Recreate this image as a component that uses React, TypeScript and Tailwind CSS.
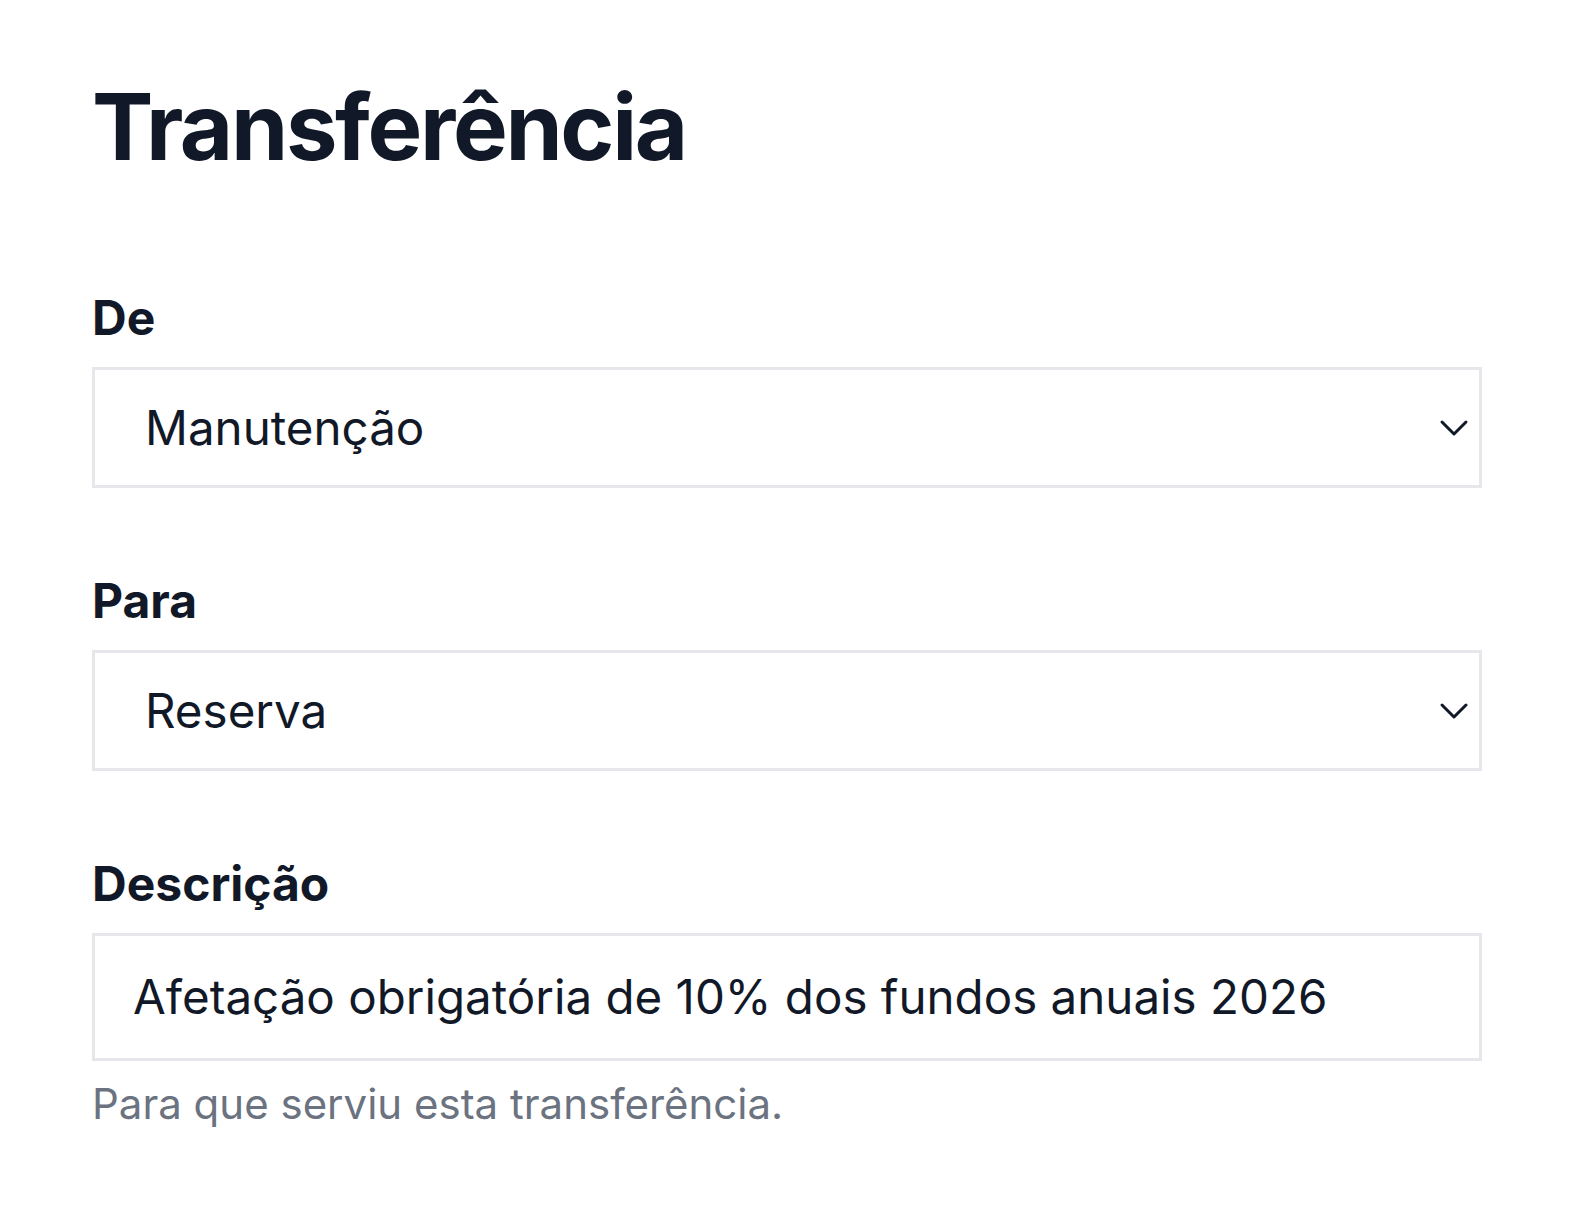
import React, { useState } from 'react';

const font = { fontFamily: 'Inter, "Noto Sans", sans-serif' };

function Chevron() {
  return (
    <svg width="30" height="18" viewBox="0 0 30 18" fill="none" className="shrink-0">
      <path d="M3 3 L15 15 L27 3" stroke="#111827" strokeWidth="3" strokeLinecap="round" strokeLinejoin="round" />
    </svg>
  );
}

function SelectField({ label, value }: { label: string; value: string }) {
  return (
    <div className="flex flex-col">
      <label className="text-[48px] font-bold leading-[56px] text-[#111827]">{label}</label>
      <div className="mt-[21px] flex h-[121px] items-center justify-between border-[3px] border-[#e5e7eb] bg-white pl-[50px] pr-[10px]">
        <span className="text-[47.5px] leading-[56px] text-[#111827]">{value}</span>
        <Chevron />
      </div>
    </div>
  );
}

export default function App() {
  const [desc] = useState('Afetação obrigatória de 10% dos fundos anuais 2026');

  return (
    <div className="min-h-[1214px] bg-white pl-[92px] pr-[94px] pt-[72px]" style={font}>
      <h1 className="text-[92px] font-bold leading-[110px] tracking-[-2.3px] text-[#111827]">Transferência</h1>

      <div className="mt-[108px] flex flex-col gap-[85px]">
        <SelectField label="De" value="Manutenção" />
        <SelectField label="Para" value="Reserva" />

        <div className="flex flex-col">
          <label className="text-[48px] font-bold leading-[56px] text-[#111827]">Descrição</label>
          <div className="mt-[21px] flex h-[128px] items-center border-[3px] border-[#e5e7eb] bg-white pl-[38px]">
            <span className="text-[47.5px] leading-[56px] text-[#111827]">{desc}</span>
          </div>
          <p className="mt-[17px] text-[42px] leading-[52px] text-[#6b7280]">Para que serviu esta transferência.</p>
        </div>
      </div>
    </div>
  );
}
